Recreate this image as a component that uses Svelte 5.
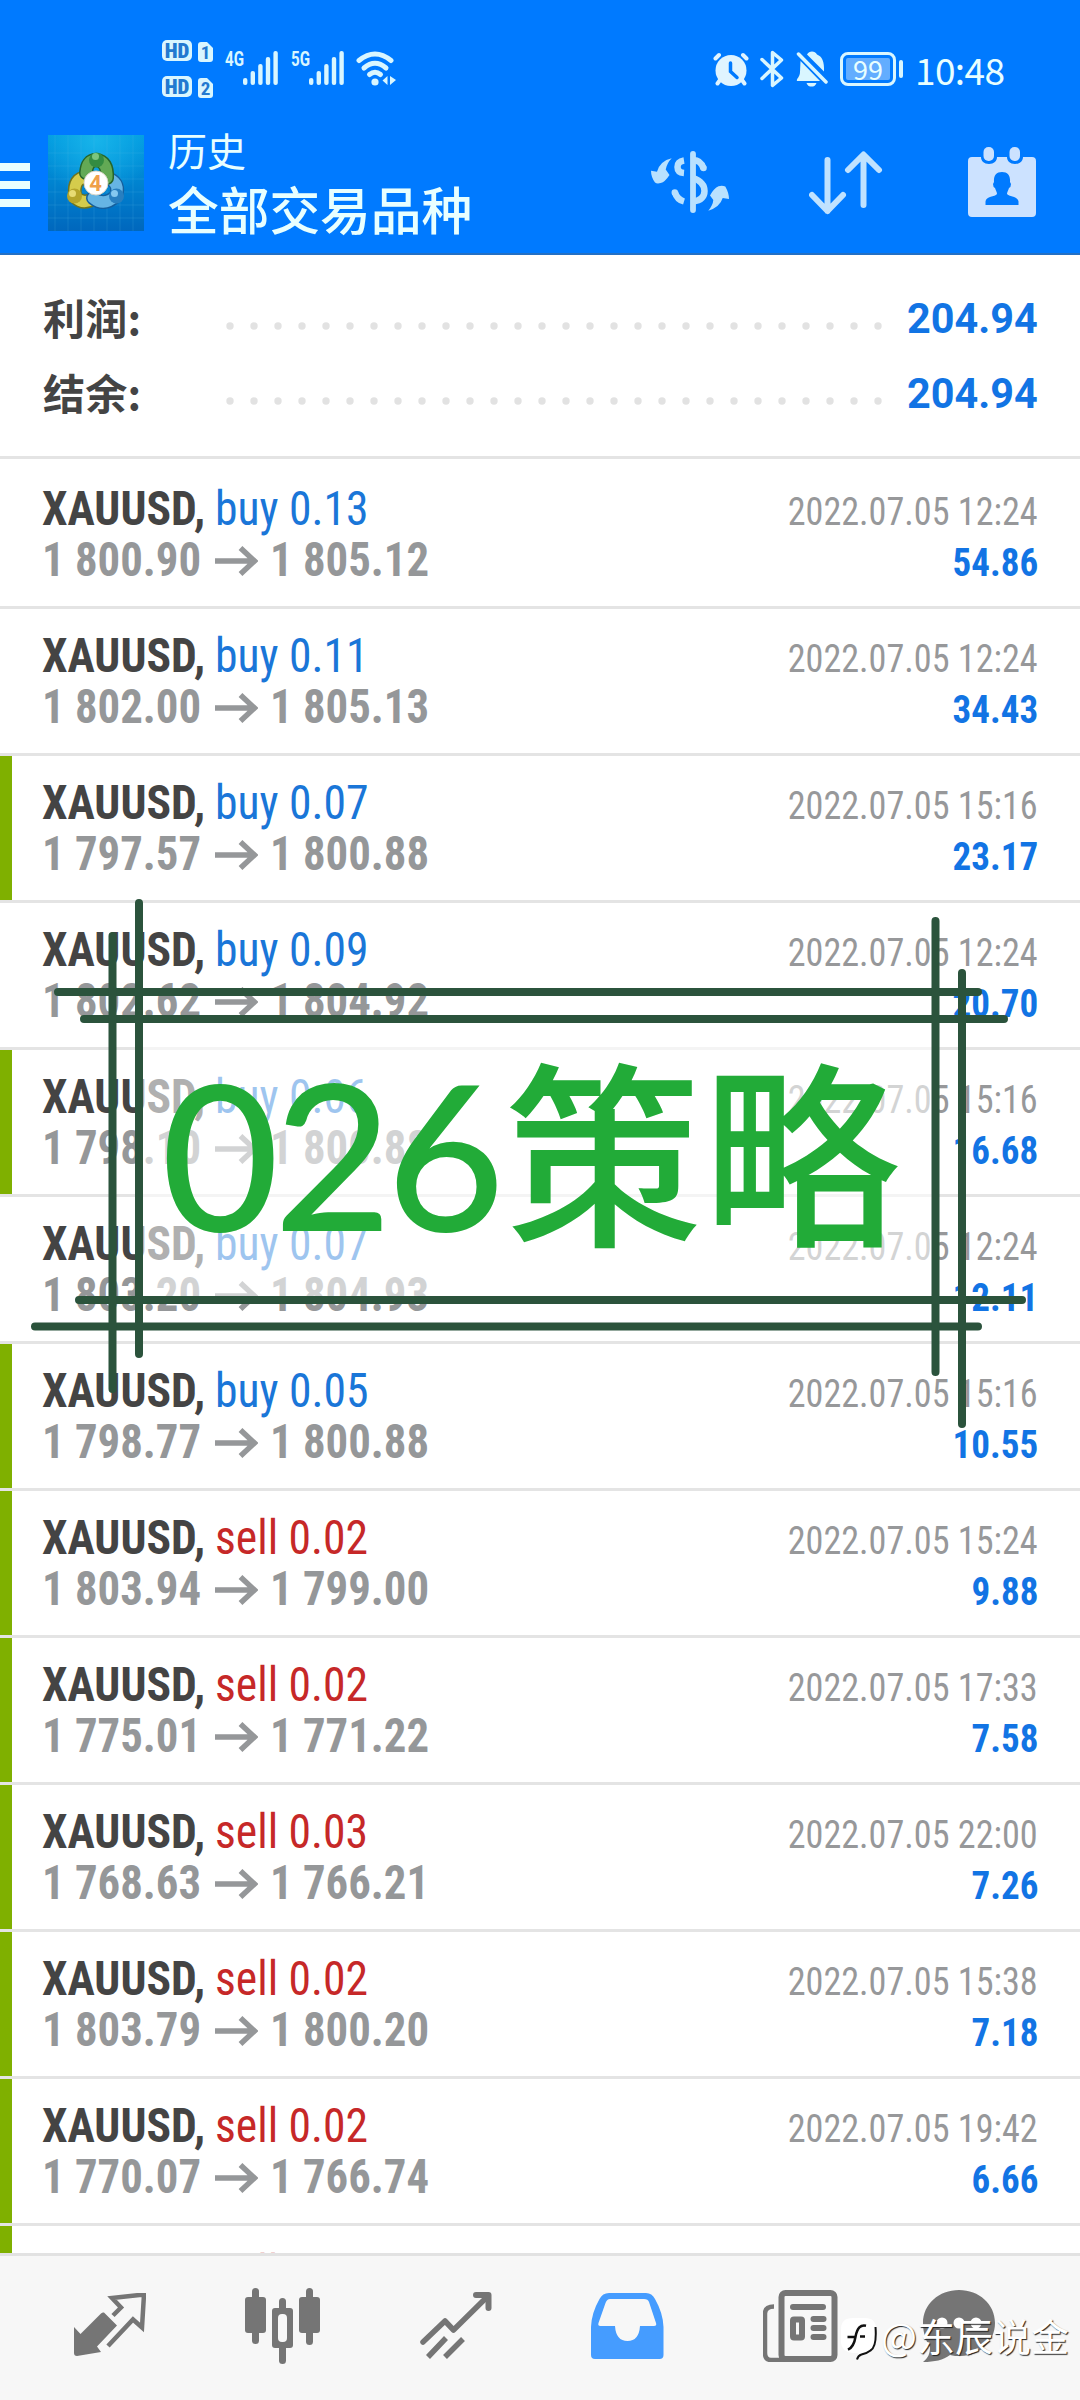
<script lang="ts">
	type Deal = { side: 'buy' | 'sell'; lot: string; open: string; close: string; time: string; profit: string; mark: boolean };

	function deal(side: 'buy' | 'sell', lot: string, open: string, close: string, time: string, profit: string, mark = true): Deal {
		return { side, lot, open, close, time: `2022.07.05 ${time}`, profit, mark };
	}

	const summary = [
		{ label: '利润:', value: '204.94' },
		{ label: '结余:', value: '204.94' }
	];

	const deals: Deal[] = [
		deal('buy', '0.13', '1 800.90', '1 805.12', '12:24', '54.86', false),
		deal('buy', '0.11', '1 802.00', '1 805.13', '12:24', '34.43', false),
		deal('buy', '0.07', '1 797.57', '1 800.88', '15:16', '23.17'),
		deal('buy', '0.09', '1 802.62', '1 804.92', '12:24', '20.70', false),
		deal('buy', '0.06', '1 798.10', '1 800.88', '15:16', '16.68'),
		deal('buy', '0.07', '1 803.20', '1 804.93', '12:24', '12.11', false),
		deal('buy', '0.05', '1 798.77', '1 800.88', '15:16', '10.55'),
		deal('sell', '0.02', '1 803.94', '1 799.00', '15:24', '9.88'),
		deal('sell', '0.02', '1 775.01', '1 771.22', '17:33', '7.58'),
		deal('sell', '0.03', '1 768.63', '1 766.21', '22:00', '7.26'),
		deal('sell', '0.02', '1 803.79', '1 800.20', '15:38', '7.18'),
		deal('sell', '0.02', '1 770.07', '1 766.74', '19:42', '6.66')
	];

	const dots = Array.from({ length: 28 }, (_, i) => 4 + i * 24);
	const bars = [7, 14, 21, 28, 34];
</script>

{#snippet signal()}
	<svg class="signal" width="36" height="34" viewBox="0 0 36 34">
		{#each bars as h, i}
			<rect x={i * 7.6} y={34 - h} width="4.4" height={h} rx="2.1" />
		{/each}
	</svg>
{/snippet}

<div class="screen">
	<header>
		<div class="status">
			<div class="sims">
				{#each ['1', '2'] as n}
					<div class="sim"><b>HD</b><i>{n}</i></div>
				{/each}
			</div>
			<span class="net">4G</span>
			{@render signal()}
			<span class="net five">5G</span>
			{@render signal()}
			<svg class="wifi" width="41" height="36" viewBox="0 0 41 36">
				<g fill="none" stroke="#d9f6ff" stroke-width="5" stroke-linecap="round">
					<path d="M3 9.500Q19 -3.500 35 9.500" />
					<path d="M8 17Q19 7.500 30 17" />
					<path d="M13.500 23.500Q19 19 24.500 23.500" />
				</g>
				<circle cx="19" cy="31" r="3.600" fill="#d9f6ff" />
				<path d="M26.500 29.500l5-4.500v9zM34 25l6 4-6 5z" fill="#d9f6ff" />
			</svg>

			<div class="right">
				<svg width="36" height="34" viewBox="0 0 36 34">
					<g stroke="#e0f4ff" stroke-width="4" stroke-linecap="round">
						<path d="M2.500 6.500L6 3M33.500 6.500L30 3M7 28l-2.500 3.500M29 28l2.500 3.500" />
					</g>
					<circle cx="18" cy="18.500" r="15.500" fill="#e0f4ff" />
					<path d="M17.500 11v8.500l6.500 6" fill="none" stroke="#007aff" stroke-width="3.500" stroke-linecap="round" />
				</svg>
				<svg class="bt" width="24" height="38" viewBox="0 0 24 38">
					<path d="M2 9.500L21.500 28L12.500 35.500V2.500L21.500 10L2 28.500" fill="none" stroke="#d9f6ff" stroke-width="3.500" stroke-linejoin="round" stroke-linecap="round" />
				</svg>
				<svg class="bell" width="32" height="36" viewBox="0 0 32 36">
					<path d="M11 3.500c1-2 3-3 5-3s4 1 5 3c5 2 7.500 7 7 17zM4.500 10L24 30H1c-1-2 3-4 3-9zM10.500 32h10c-1 3-3 3.500-5 3.500s-4-.5-5-3.500z" fill="#d9f6ff" />
					<path d="M2.500 3L30 31" stroke="#d9f6ff" stroke-width="3.500" stroke-linecap="round" />
				</svg>
				<div class="battery"><span>99</span></div>
				<span class="clock">10:48</span>
			</div>
		</div>

		<div class="bar">
			<div class="burger"><i></i><i></i><i></i></div>
			<svg class="logo" width="96" height="96" viewBox="0 0 96 96">
				<defs>
					<linearGradient id="tile" x1="0" y1="0" x2="0" y2="1">
						<stop offset="0" stop-color="#009be0" />
						<stop offset="0.500" stop-color="#0083d0" />
						<stop offset="1" stop-color="#0067bd" />
					</linearGradient>
					<radialGradient id="glow" cx="0.500" cy="0.050" r="0.600">
						<stop offset="0" stop-color="#18b4ea" />
						<stop offset="1" stop-color="#18b4ea" stop-opacity="0" />
					</radialGradient>
				</defs>
				<rect width="96" height="96" fill="url(#tile)" />
				<rect width="96" height="96" fill="url(#glow)" />
				<path d="M20 0v96M33 0v96M46 0v96M59 0v96M72 0v96M85 0v96M7 0v96M0 18h96M0 31h96M0 44h96M0 57h96M0 70h96M0 83h96" stroke="#5cc2ee" stroke-opacity="0.180" stroke-width="1" />
				<g fill="none" stroke-linecap="round">
					<path d="M27 60q-2-17 12-18M27 62q8 8 18 2" stroke="#6e7420" stroke-width="14" />
					<path d="M27 60q-2-17 12-18M27 62q8 8 18 2" stroke="#d5cc4c" stroke-width="11" />
					<path d="M68 61q-12 11-23 2M68 61q4-12-6-17" stroke="#155f9d" stroke-width="14" />
					<path d="M68 61q-12 11-23 2M68 61q4-12-6-17" stroke="#66b5e4" stroke-width="11" />
					<path d="M38 38q1-13 10-13q12 1 11 18" stroke="#25652a" stroke-width="14" />
					<path d="M38 38q1-13 10-13q12 1 11 18" stroke="#63a955" stroke-width="11" />
				</g>
				<circle cx="48.500" cy="25" r="7.500" fill="#338c42" />
				<circle cx="47.500" cy="21.500" r="3.500" fill="#7cc57d" />
				<circle cx="26.500" cy="61" r="7.500" fill="#b5a52a" />
				<circle cx="24.500" cy="58.500" r="3.500" fill="#e8dc74" />
				<circle cx="68.500" cy="61" r="7.500" fill="#287fc0" />
				<circle cx="66.500" cy="58.500" r="3.500" fill="#85c8f0" />
				<circle cx="48" cy="48" r="12" fill="#fff" stroke="#d9d5c8" />
				<text x="47.500" y="55.500" text-anchor="middle" font-size="22" font-weight="bold" fill="#efa04a">4</text>
			</svg>
			<div class="titles">
				<div class="section">历史</div>
				<div class="symbols">全部交易品种</div>
			</div>

			<svg class="currency" width="78" height="62" viewBox="0 0 78 62">
				<g fill="#b9e1fe">
					<path d="M20.700 7.300Q16 12 14.700 18.500L18.500 24Q14 31 9.700 32Q6 33 4 31.500Q0 26 0 19.700L6 20.700Q9 10 20.700 7.300z" />
					<path d="M57.300 59.700Q62 54 62.300 49L59 44.500Q63 37 67.500 35.300Q71 34 74.300 35.500Q78 42 78 48L71.700 47Q69 56 57.300 59.700z" />
				</g>
				<g fill="none" stroke="#b9e1fe">
					<path d="M33 9.500q-6.500 1-6.500 6.500T33 22" stroke-width="6.500" />
					<path d="M24 41.500q2 7 9 9M42 9q8 0 10.500 8.500" stroke-width="6.500" />
					<path d="M23.800 41.500v0M52.500 17v0" stroke-width="6.500" stroke-linecap="round" />
					<path d="M42 27q11.500 4 11.500 13T42 50.500" stroke-width="6.500" />
					<path d="M42 3v56" stroke-width="5.800" stroke-linecap="round" />
				</g>
			</svg>
			<svg class="sort" width="74" height="64" viewBox="0 0 74 64">
				<path d="M18.500 9v51M3 44l15.500 16L34 44M54.500 54V4M39 19L54.500 3.500L70 19" fill="none" stroke="#c0e2ff" stroke-width="6" stroke-linecap="round" stroke-linejoin="round" />
			</svg>
			<svg class="calendar" width="68" height="72" viewBox="0 0 68 72">
				<path d="M4 10h9c0 4 3 7 8 7s8-3 8-7h10c0 4 3 7 8 7s8-3 8-7h9q4 0 4 4v52q0 4-4 4H4q-4 0-4-4V14q0-4 4-4z" fill="#cce2ff" />
				<rect x="15.500" y="0" width="10.500" height="14" rx="5" fill="#cce2ff" />
				<rect x="41.500" y="0" width="10.500" height="14" rx="5" fill="#cce2ff" />
				<path d="M34 25c6 0 8.500 4 8 10l1 2q0 3-2 4c-1 3-2 4-2 6 2 3 11 2 11.500 7.500V58H17.500v-3.500C18 49 27 50 29 47c0-2-1-3-2-6q-2-1-2-4l1-2c-.5-6 2-10 8-10z" fill="#007aff" />
			</svg>
		</div>
	</header>

	<section class="summary">
		{#each summary as row}
			<div class="total">
				<span class="label">{row.label}</span>
				<svg width="656" height="8" viewBox="0 0 656 8">
					{#each dots as cx}
						<circle {cx} cy="4" r="3.700" fill="#e2e2e2" />
					{/each}
				</svg>
				<span class="amount">{row.value}</span>
			</div>
		{/each}
	</section>

	<main>
		{#each deals as d}
			<article class:marked={d.mark}>
				<div class="line">
					<span class="name">XAUUSD,</span>
					<span class="lot {d.side}">{d.side} {d.lot}</span>
					<time>{d.time}</time>
				</div>
				<div class="line">
					<span class="price">{d.open}</span>
					<svg class="arrow" width="43" height="30" viewBox="0 0 43 30">
						<path d="M0 15h39M25.500 2L39.500 15L25.500 28" fill="none" stroke="#959799" stroke-width="5.500" />
					</svg>
					<span class="price">{d.close}</span>
					<span class="profit">{d.profit}</span>
				</div>
			</article>
		{/each}
		<!-- the next deal only peeks out above the tab bar -->
		<article class="marked">
			<div class="line">
				<span class="name">XAUUSD,</span>
				<span class="lot sell">sell 0.02</span>
			</div>
		</article>
	</main>

	<nav>
		<svg width="72" height="66" viewBox="0 0 72 66">
			<path d="M30 19.500L43 32.500L23 53.500l4 5.500-24 4q-3 0-3-3V34l6.500 7L27 20.500q1.500-1.500 3-1z" fill="#757575" />
			<path d="M39 22.500l8-8L38 5l32-3.500-2 33-9-8-25 26.500" fill="none" stroke="#757575" stroke-width="4.500" />
		</svg>
		<svg width="76" height="76" viewBox="0 0 76 76">
			<g fill="#757575">
				<rect y="9" width="21" height="36" rx="3" />
				<rect x="7" width="7" height="56" rx="3.500" />
				<rect x="54" y="9" width="21" height="36" rx="3" />
				<rect x="61" width="7" height="57" rx="3.500" />
				<rect x="34" y="10" width="7" height="66" rx="3.500" />
				<rect x="27" y="20" width="21" height="40" rx="3" />
			</g>
			<rect x="33" y="26" width="9" height="28" rx="4" fill="#f7f7f7" />
		</svg>
		<svg width="72" height="68" viewBox="0 0 72 68">
			<g fill="none" stroke="#757575" stroke-width="5.500">
				<path d="M3 50L25 29l8.500 9L68 4" stroke-linecap="round" stroke-linejoin="round" />
				<path d="M56 3h12.500v13" stroke-width="6" stroke-linecap="round" stroke-linejoin="round" />
				<path d="M8 65L26 46M25 65L43 47" />
			</g>
		</svg>
		<svg width="73" height="66" viewBox="0 0 73 66">
			<path d="M18 0h37q6 0 9 6q8 14 8.500 28v28q0 4-4 4H4q-4 0-4-4V34Q.5 20 8.500 6q3-6 9.500-6z" fill="#459cff" />
			<path d="M19 6h34q4 0 5 3l7 21q1 3-2 3H49q-1 15-12.500 15T24 33H9.500q-3 0-2-3l7-20q1.500-4 4.500-4z" fill="#f7f7f7" />
		</svg>
		<svg width="76" height="72" viewBox="0 0 76 72">
			<path d="M11 16.500q-9 0-9 7V63q0 7 6 7h60" fill="none" stroke="#757575" stroke-width="4.500" />
			<path d="M11 20v46" stroke="#f7f7f7" stroke-width="8" />
			<rect x="18.500" y="3" width="53" height="66" rx="4" fill="#f7f7f7" stroke="#757575" stroke-width="6" />
			<rect x="27" y="14" width="36" height="6" rx="3" fill="#757575" />
			<rect x="30" y="29.500" width="9" height="18" rx="1" fill="#f7f7f7" stroke="#757575" stroke-width="6" />
			<path d="M50.500 29h10M50.500 38h10M50.500 47h10" stroke="#757575" stroke-width="6" stroke-linecap="round" />
		</svg>
		<svg class="chat" width="72" height="72" viewBox="0 0 72 72">
			<path d="M36 0c20 0 36 14 36 33S56 66 38 66c-4 0-8 0-11-1-7 5-15 7-27 7 5-4 7-8 7-15C3 51 0 43 0 33 0 14 16 0 36 0z" fill="#757575" />
			<circle cx="19" cy="33" r="5.500" fill="#fff" /><circle cx="36" cy="33" r="5.500" fill="#fff" /><circle cx="53" cy="33" r="5.500" fill="#fff" />
		</svg>
	</nav>

	<div class="banner">
		<div class="veil"></div>
		<svg width="1080" height="560" viewBox="0 880 1080 560">
			<g stroke="#2b533c" stroke-width="8" stroke-linecap="round">
				<path d="M58 992H978M84 1019H1004M79 1300H1022M35 1326.500H978" />
				<path d="M112.500 936V1389M139 903V1354M935.500 921V1372M962 973V1424" />
			</g>
		</svg>
		<div class="slogan"><span>026</span>策略</div>
	</div>

	<div class="credit">
		<svg width="38" height="46" viewBox="0 0 38 46">
			<path d="M14 3h12q11 0 11 11v12q0 10-10 12l-8 4V38h-5Q2 37 2 26V14Q2 3 14 3z" fill="#fff" />
			<path d="M36.500 12q1.500 20-5 23.500q-3 2.500-9 4q-3.500 1-4.500 5" fill="none" stroke="#111" stroke-width="2" />
			<path d="M27 10.700q-8-2-10.500 11q-1.500 10-7.500 13M8.500 22h7M21 21.500h5" fill="none" stroke="#111" stroke-width="2.500" />
		</svg>
		<span>@东辰说金</span>
	</div>
</div>

<style>
	:global(body) {
		background: #fff;
	}

	.screen {
		position: relative;
		display: flex;
		flex-direction: column;
		width: 1080px;
		height: 2400px;
		overflow: hidden;
		background: #fff;
		font-family: Roboto, 'Noto Sans CJK SC', sans-serif;
	}

	svg {
		display: block;
		flex: none;
	}

	header {
		height: 255px;
		box-sizing: border-box;
		border-bottom: 2px solid #2470c4;
		background: #007aff;
		color: #e8ffff;
		flex: none;
	}

	.status {
		display: flex;
		align-items: flex-start;
		height: 135px;
		padding-left: 162px;
		box-sizing: border-box;
	}

	.sims {
		display: grid;
		gap: 15px;
		padding-top: 40px;
		width: 63px;
	}

	.sim {
		display: flex;
		gap: 6px;
		height: 21px;
		color: #2279d0;
		font: bold 21px/22px Roboto, sans-serif;
		font-stretch: 80%;
		text-align: center;
	}

	.sim b {
		width: 30px;
		border-radius: 5px;
		background: #d9f6ff;
	}

	.sim i {
		width: 15px;
		height: 20px;
		margin-top: 2px;
		border-radius: 3px;
		background: #d9f6ff;
		font-style: normal;
		font-size: 19px;
		clip-path: polygon(0 0, 60% 0, 100% 30%, 100% 100%, 0 100%);
	}

	.net {
		width: 18px;
		padding-top: 48px;
		font: bold 21px/22px Roboto, sans-serif;
		color: #d9f6ff;
		transform: scaleX(0.72);
		transform-origin: 0 0;
	}

	.five {
		margin-left: 12px;
	}

	.signal {
		margin-top: 51px;
		fill: #d9f6ff;
	}

	.wifi {
		margin: 51px 0 0 11px;
	}

	.right {
		display: flex;
		align-items: center;
		height: 36px;
		margin: 51px 77px 0 auto;
	}

	.bt {
		margin-left: 11px;
	}

	.bell {
		margin-left: 12px;
	}

	.battery {
		position: relative;
		width: 56px;
		height: 34px;
		margin-left: 12px;
		box-sizing: border-box;
		border: 3px solid #d9f6ff;
		border-radius: 8px;
		padding: 3px;
	}

	.battery span {
		display: block;
		height: 22px;
		background: #62adff;
		font: 27px/22px 'Noto Sans CJK SC', sans-serif;
		text-align: center;
		border-radius: 2px;
	}

	.battery::after {
		content: '';
		position: absolute;
		right: -10px;
		top: 5px;
		width: 4px;
		height: 18px;
		border-radius: 2px;
		background: #d9f6ff;
	}

	.clock {
		width: 88px;
		margin-left: 19px;
		font: 37px/34px 'Noto Sans CJK SC', sans-serif;
		letter-spacing: -0.6px;
	}

	.bar {
		display: flex;
		align-items: flex-start;
	}

	.burger {
		display: grid;
		gap: 10px;
		width: 30px;
		padding-top: 28px;
	}

	.burger i {
		height: 8px;
		background: #e8ffff;
	}

	.logo {
		margin-left: 18px;
	}

	.titles {
		width: 482px;
		margin-left: 24px;
		font-family: 'Noto Sans CJK SC', sans-serif;
	}

	.section {
		margin-top: -10px;
		font-size: 39px;
		line-height: 48px;
	}

	.symbols {
		font-size: 50.7px;
		font-weight: 500;
		line-height: 70px;
	}

	.currency {
		margin: 16px 0 0 1px;
	}

	.sort {
		margin: 16px 0 0 80px;
	}

	.calendar {
		margin: 12px 0 0 85px;
	}

	.summary {
		height: 201px;
		box-sizing: border-box;
		padding: 26px 42px 0 43px;
		flex: none;
	}

	.total {
		display: flex;
		align-items: center;
		height: 75px;
	}

	.label {
		width: 183px;
		margin-top: -4px;
		font: bold 42px/75px 'Noto Sans CJK SC', sans-serif;
		letter-spacing: 0.3px;
		color: #444;
	}

	.total svg {
		margin-top: 15px;
	}

	.amount {
		margin-left: auto;
		font-size: 42px;
		font-weight: bold;
		color: #1274e4;
		transform: scaleX(0.985);
		transform-origin: 100% 0;
	}

	main {
		flex: 1;
		min-height: 0;
		overflow: hidden;
	}

	article {
		height: 147px;
		box-sizing: border-box;
		padding: 19px 42px 0;
		border-top: 3px solid #e4e4e4;
	}

	article:first-child {
		height: 150px;
		padding-top: 22px;
	}

	.marked {
		background: linear-gradient(#7fb000, #7fb000) 0 0 / 12px 100% no-repeat;
	}

	.line {
		display: flex;
		height: 51px;
		align-items: baseline;
		white-space: pre;
		font-size: 48px;
		line-height: 56px;
		font-stretch: 75%;
	}

	.name,
	.lot,
	.price {
		transform: scaleX(0.95);
		transform-origin: 0 0;
	}

	.name {
		width: 173px;
		font-weight: bold;
		color: #444;
	}

	.buy {
		color: #1a76d8;
	}

	.sell {
		color: #c62828;
	}

	time {
		margin-left: auto;
		font-size: 39px;
		color: #97989a;
		transform: scaleX(0.927);
		transform-origin: 100% 0;
	}

	.price {
		width: 173px;
		font-weight: bold;
		color: #959799;
		transform: scaleX(0.933);
	}

	.arrow {
		margin-right: 12px;
	}

	.profit {
		margin-left: auto;
		font-size: 39px;
		font-weight: bold;
		color: #1274e4;
		transform: scaleX(0.95);
		transform-origin: 100% 0;
	}

	nav {
		display: flex;
		align-items: center;
		gap: 99px;
		height: 147px;
		box-sizing: border-box;
		padding: 0 0 5px 74px;
		border-top: 3px solid #e2e2e2;
		background: #f7f7f7;
		flex: none;
	}

	.chat {
		margin-left: -15px;
	}

	.banner {
		position: absolute;
		left: 0;
		top: 880px;
		width: 1080px;
		height: 560px;
	}

	.veil {
		position: absolute;
		left: 139px;
		top: 139px;
		width: 796px;
		height: 281px;
		background: rgba(255, 255, 255, 0.58);
	}

	.banner svg {
		position: absolute;
	}

	.slogan {
		position: absolute;
		left: 161px;
		top: 165px;
		font: 500 198px/200px 'Noto Sans CJK SC', sans-serif;
		color: #22ab38;
		white-space: nowrap;
	}

	.slogan span {
		margin-right: 5px;
		font-family: Lato, sans-serif;
		font-size: 204px;
		letter-spacing: -5.6px;
	}

	.credit {
		position: absolute;
		left: 839px;
		top: 2315px;
		display: flex;
		gap: 4px;
		font: 38px/40px 'Noto Sans CJK SC', sans-serif;
		color: #fff;
		text-shadow: 1px 1px 1px #222;
	}
</style>
